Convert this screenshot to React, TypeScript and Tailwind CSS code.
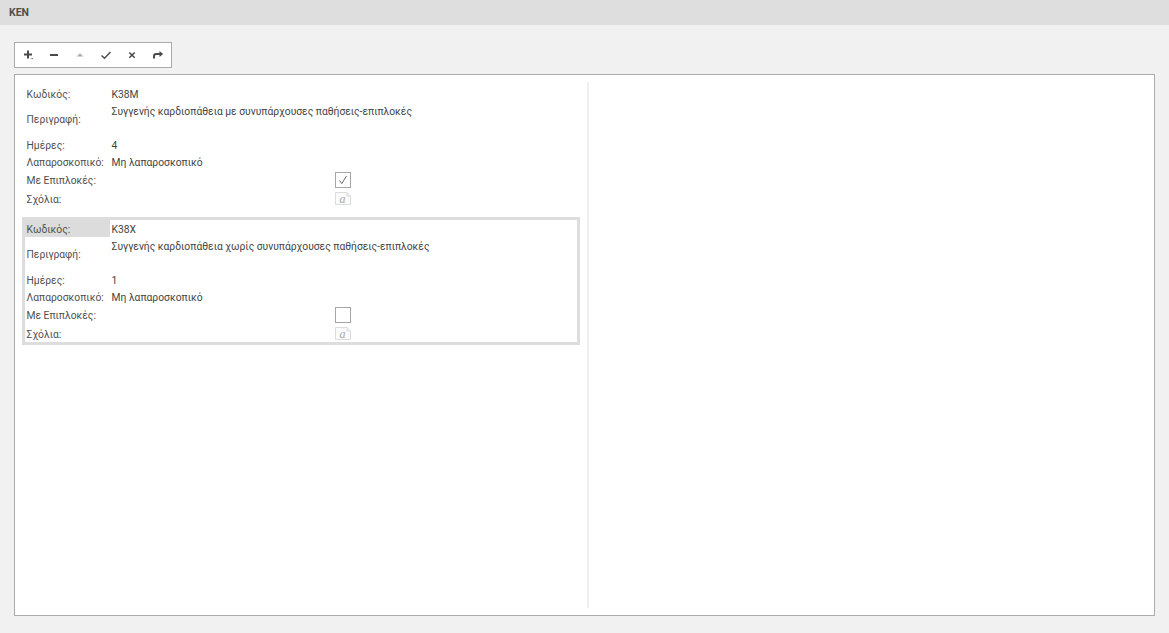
const FONT = "font-['Roboto',sans-serif]";

type Rec = {
  code: string;
  desc: string;
  days: string;
  lap: string;
  checked: boolean;
  focused?: boolean;
};

const RECORDS: Rec[] = [
  {
    code: "K38M",
    desc: "Συγγενής καρδιοπάθεια με συνυπάρχουσες παθήσεις-επιπλοκές",
    days: "4",
    lap: "Μη λαπαροσκοπικό",
    checked: true,
  },
  {
    code: "K38X",
    desc: "Συγγενής καρδιοπάθεια χωρίς συνυπάρχουσες παθήσεις-επιπλοκές",
    days: "1",
    lap: "Μη λαπαροσκοπικό",
    checked: false,
    focused: true,
  },
];

function ToolButton({ children }: { children: React.ReactNode }) {
  return (
    <div className="flex h-6 w-[26px] items-center justify-center text-[#4a4a4a]">
      <svg width="12" height="12" viewBox="0 0 12 12" fill="none" stroke="currentColor">
        {children}
      </svg>
    </div>
  );
}

function Toolbar() {
  return (
    <div className="flex h-[26px] w-[158px] items-center border border-[#ababab] bg-white">
      <ToolButton>
        <path d="M6 1.5v8M2 5.5h8" strokeWidth="2" />
        <rect x="9.5" y="9" width="1.2" height="1.2" fill="currentColor" stroke="none" />
      </ToolButton>
      <ToolButton>
        <path d="M2 6h8" strokeWidth="2" />
      </ToolButton>
      <ToolButton>
        <path d="M2.5 7.5 6 4.2l3.5 3.3z" fill="#b0b0b0" stroke="none" />
      </ToolButton>
      <ToolButton>
        <path d="M1.5 6.5 4.5 9.3 10.5 3" strokeWidth="1.4" />
      </ToolButton>
      <ToolButton>
        <path d="M3.3 3.5 8.7 8.8M8.7 3.5 3.3 8.8" strokeWidth="1.6" />
      </ToolButton>
      <ToolButton>
        <path d="M2 9.5V7.2c0-1.3.8-2.2 2.2-2.2H8" strokeWidth="2" />
        <path d="M7.5 2 11.2 5 7.5 8z" fill="currentColor" stroke="none" />
      </ToolButton>
    </div>
  );
}

function NoteIcon() {
  return (
    <svg width="16" height="13" viewBox="0 0 16 13" fill="none">
      <path d="M.5.5h11.5l3.5 3.5v8.5H.5z" fill="#fbfbfb" stroke="#dcdcdc" />
      <path d="M12 .5v3.5h3.5" fill="#ececec" stroke="#dcdcdc" />
      <text x="4.5" y="10.5" fontSize="12" fontStyle="italic" fill="#a8a8a8" fontFamily="Liberation Serif, serif">
        a
      </text>
    </svg>
  );
}

function Row({
  label,
  height,
  labelPad = "pt-px",
  highlight,
  children,
}: {
  label: string;
  height: string;
  labelPad?: string;
  highlight?: boolean;
  children: React.ReactNode;
}) {
  return (
    <div className={`flex ${height}`}>
      <div
        className={`flex w-[85px] shrink-0 items-center pl-[1.5px] text-[#505050] ${labelPad} ${
          highlight ? "bg-[#dcdcdc]" : ""
        }`}
      >
        {label}:
      </div>
      <div className="min-w-0 flex-1 pl-[1.5px]">{children}</div>
    </div>
  );
}

function Record({ rec }: { rec: Rec }) {
  const line = "flex h-full items-center pt-px text-[#444444]";
  return (
    <div className={`h-[128px] w-[558px] border-[3px] ${rec.focused ? "border-[#dddddd]" : "border-transparent"}`}>
      <Row label="Κωδικός" height="h-[17px]" labelPad="pt-[3px]" highlight={rec.focused}>
        <div className="flex h-full items-center pt-[3px] text-[#444444]">{rec.code}</div>
      </Row>
      <Row label="Περιγραφή" height="h-[35px]">
        <div className="pt-px leading-[17px] text-[#444444]">{rec.desc}</div>
      </Row>
      <Row label="Ημέρες" height="h-[17px]">
        <div className={line}>{rec.days}</div>
      </Row>
      <Row label="Λαπαροσκοπικό" height="h-[17px]">
        <div className={line}>{rec.lap}</div>
      </Row>
      <Row label="Με Επιπλοκές" height="h-[18px]" labelPad="pt-px">
        <div className="flex h-full items-center pl-[223.5px]">
          <div className="flex size-4 shrink-0 items-center justify-center border border-[#a6a6a6] bg-white">
            {rec.checked && (
              <svg width="12" height="12" viewBox="0 0 12 12" fill="none" stroke="#666666" strokeWidth="1">
                <path d="M2.5 6.5 4.8 9.5 9.5 2" />
              </svg>
            )}
          </div>
        </div>
      </Row>
      <Row label="Σχόλια" height="h-[18px]" labelPad="pt-[3px]">
        <div className="flex h-full items-center pl-[223.5px]">
          <NoteIcon />
        </div>
      </Row>
    </div>
  );
}

export default function App() {
  return (
    <div className={`${FONT} flex h-[633px] w-[1169px] flex-col overflow-hidden bg-[#f1f1f1] text-[10.3px]`}>
      <div className="flex h-[25px] items-center bg-[#dedede] pl-[9px] text-[10.5px] font-bold text-[#4f4f4f]">
        KEN
      </div>
      <div className="flex flex-1 flex-col px-[14px] pt-[17px]">
        <Toolbar />
        <div className="mt-[6px] flex h-[542px] w-[1141px] border border-[#ababab] bg-white p-[7px]">
          <div className="flex w-[565px] shrink-0 flex-col gap-[7px]">
            {RECORDS.map((r) => (
              <Record key={r.code} rec={r} />
            ))}
          </div>
          <div className="w-[2px] bg-[#efefef]" />
        </div>
      </div>
    </div>
  );
}
